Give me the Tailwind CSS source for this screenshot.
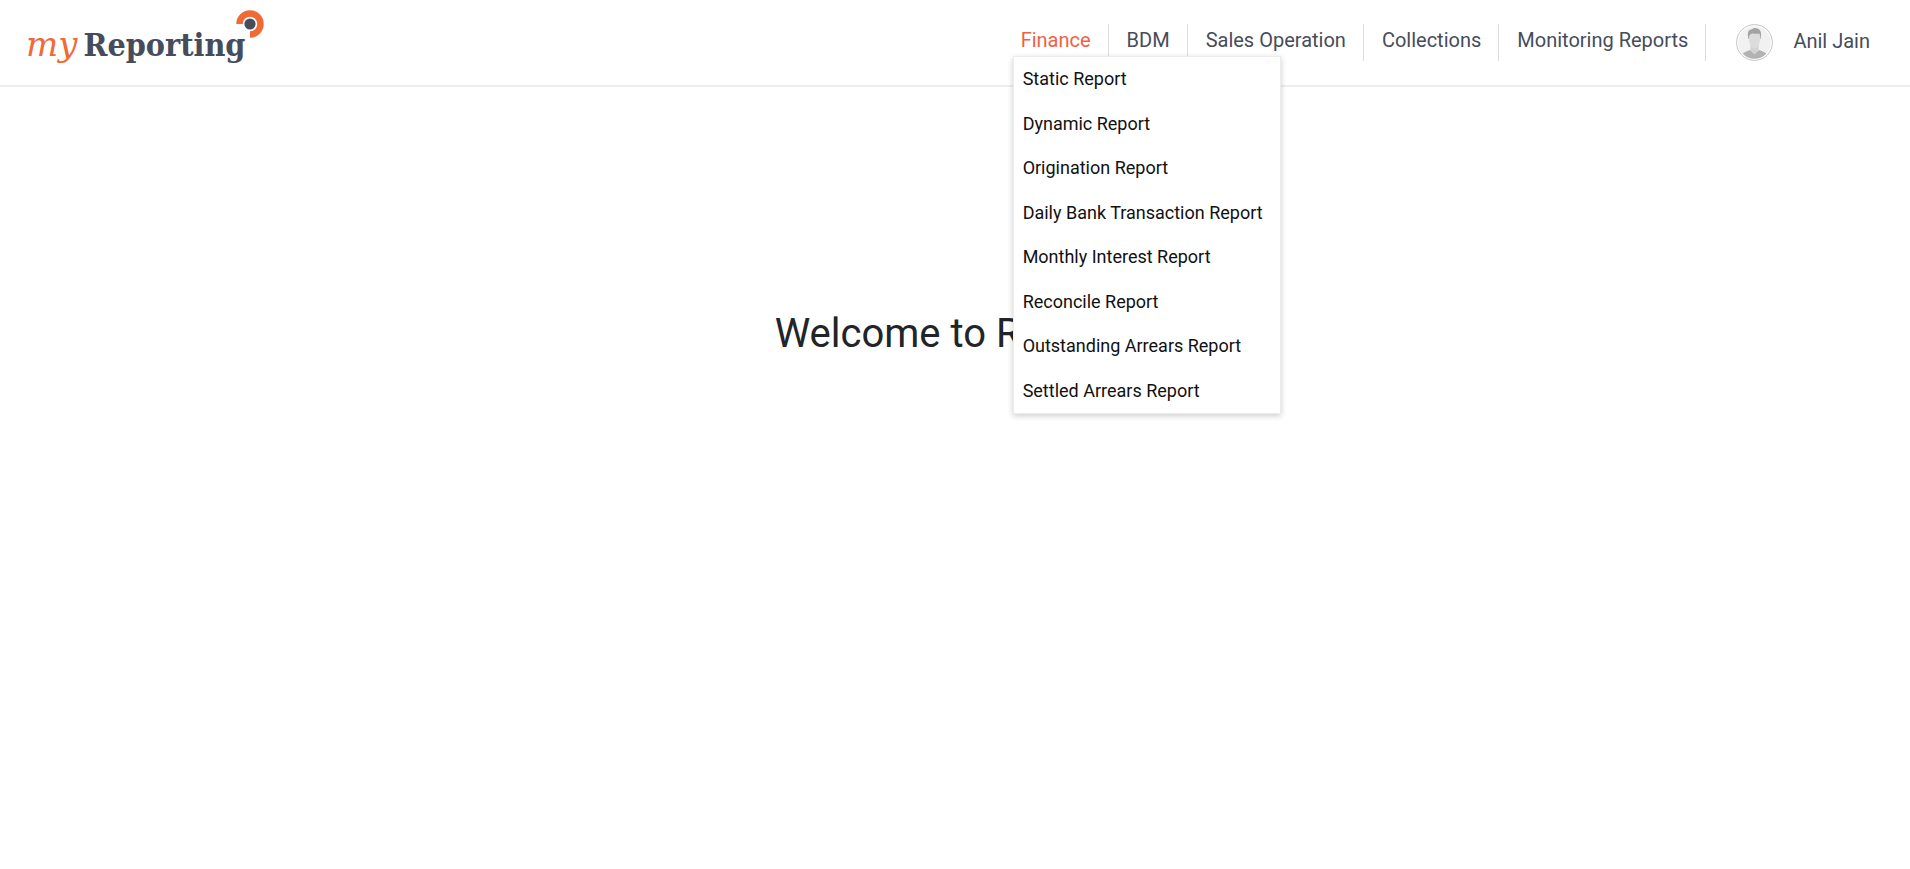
<!DOCTYPE html>
<html lang="en">
<head>
<meta charset="utf-8">
<title>myReporting</title>
<script src="https://cdn.jsdelivr.net/npm/@tailwindcss/browser@4"></script>
</head>
<body class="min-h-screen bg-white font-['Roboto',sans-serif] text-[#212529]">
<header class="flex items-start justify-between border-b-2 border-[#ededed] pl-[26px] pr-10">
  <a href="#" aria-label="myReporting" class="relative flex items-baseline gap-[6px] h-[85px] pt-6 leading-10 whitespace-nowrap">
    <span class="font-['DejaVu_Serif',serif] italic text-[34px] text-[#f06a35]">my</span>
    <span class="font-['DejaVu_Serif_Condensed','DejaVu_Serif',serif] font-bold text-[32px] text-[#464c5b]">Reporting</span>
    <svg class="absolute left-[210px] top-[10px]" width="28" height="28" viewBox="0 0 28 28" aria-hidden="true">
      <path d="M3.5 14A10.5 10.5 0 1 1 14 24.5" fill="none" stroke="#f06a35" stroke-width="6.5"/>
      <circle cx="14" cy="14" r="5.6" fill="#464c5b"/>
    </svg>
  </a>
  <div class="flex items-start pt-6">
    <nav aria-label="Main">
      <ul class="flex text-xl leading-8 text-[#464c5b]">
        <li class="relative h-[37px] border-r border-[#dcdde0] pl-[18px] pr-[17px]">
          <a href="#" class="text-[#f0623f]">Finance</a>
          <ul class="absolute left-[10px] top-8 z-10 grid h-[358px] auto-rows-fr border border-[#ececec] bg-white pl-[9px] pr-[17px] text-lg leading-6 whitespace-nowrap text-[#111] shadow-[0_2px_6px_rgba(0,0,0,0.2)]">
            <li class="flex items-center"><a href="#">Static Report</a></li>
            <li class="flex items-center"><a href="#">Dynamic Report</a></li>
            <li class="flex items-center"><a href="#">Origination Report</a></li>
            <li class="flex items-center"><a href="#">Daily Bank Transaction Report</a></li>
            <li class="flex items-center"><a href="#">Monthly Interest Report</a></li>
            <li class="flex items-center"><a href="#">Reconcile Report</a></li>
            <li class="flex items-center"><a href="#">Outstanding Arrears Report</a></li>
            <li class="flex items-center"><a href="#">Settled Arrears Report</a></li>
          </ul>
        </li>
        <li class="h-[37px] border-r border-[#dcdde0] pl-[18px] pr-[17px]"><a href="#">BDM</a></li>
        <li class="h-[37px] border-r border-[#dcdde0] pl-[18px] pr-[17px]"><a href="#">Sales Operation</a></li>
        <li class="h-[37px] border-r border-[#dcdde0] pl-[18px] pr-[17px]"><a href="#">Collections</a></li>
        <li class="h-[37px] border-r border-[#dcdde0] pl-[18px] pr-[17px]"><a href="#">Monitoring Reports</a></li>
      </ul>
    </nav>
    <a href="#" class="ml-[30px] flex items-start gap-5 text-xl leading-[34px] text-[#464c5b]">
      <svg width="37" height="37" viewBox="0 0 37 37" aria-hidden="true">
        <circle cx="18.5" cy="18.5" r="17.9" fill="#fff" stroke="#c4c4c4"/>
        <circle cx="18.5" cy="18.5" r="16.3" fill="#f1f1f1"/>
        <path d="M6.5 29.5Q9 27.5 14 26L18.5 30 23 26Q28 27.5 30.5 29.5Q25.5 34.8 18.5 34.8T6.5 29.5Z" fill="#b2b2b2"/>
        <path d="M14.5 20H22.5V26L18.5 30.5 14.5 26Z" fill="#d2d2d2"/>
        <path d="M12.5 15Q10 5.5 16 5.2Q18 3.2 21.5 4.5Q26.500 6 24.5 15Z" fill="#a2a2a2"/>
        <path d="M13.2 12Q14 9 17 9.5Q21 10 23.5 9.5Q24.5 12 24 16Q23.5 21 21 23.5Q18.5 25.5 16 23.5Q13.5 21 13 16Z" fill="#dcdcdc"/>
      </svg>
      <span>Anil Jain</span>
    </a>
  </div>
</header>
<main class="pt-[223px] text-center">
  <h1 class="text-[40px] leading-12">Welcome to Reports</h1>
</main>
</body>
</html>
